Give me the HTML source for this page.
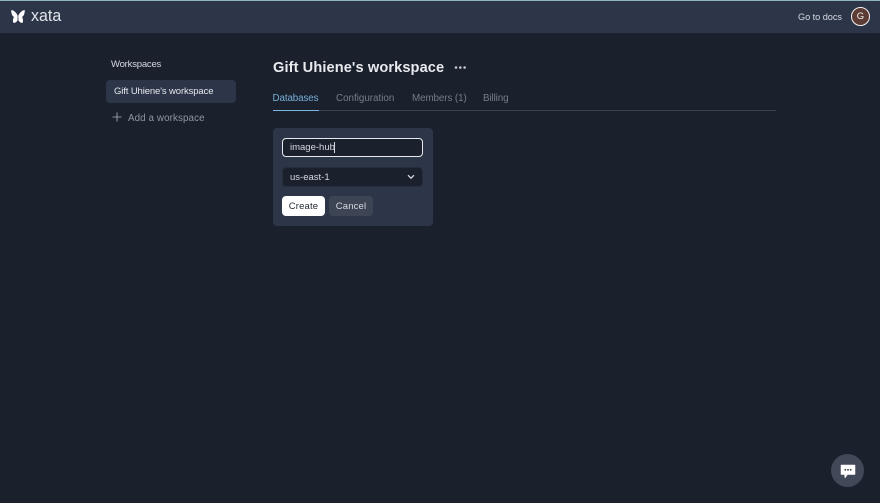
<!DOCTYPE html>
<html><head><meta charset="utf-8"><style>
html,body{margin:0;padding:0}
body{width:880px;height:503px;background:#1a202c;overflow:hidden;position:relative;font-family:"Liberation Sans",sans-serif}
div,span{position:absolute;white-space:nowrap;box-sizing:border-box}
svg{position:absolute}
</style></head><body>
<div style="left:0;top:0;width:880px;height:33px;background:#2d3548"></div>
<div style="left:0;top:0;width:880px;height:1px;background:#8fb6bb"></div>
<svg style="left:11px;top:9px" width="14" height="15" viewBox="0 0 14 15"><path d="M0.300 1 C3.500 1.500 6 4.500 6.700 7 L6.500 11.500 C5 13.500 3.500 14.200 2.500 13.800 C1.500 12.500 2 9.500 3 8 C1 7 0 3.500 0.300 1Z M13.700 1 C10.500 1.500 8 4.500 7.300 7 L7.500 11.500 C9 13.500 10.500 14.200 11.500 13.800 C12.500 12.500 12 9.500 11 8 C13 7 14 3.500 13.700 1Z" fill="#fff"/></svg>
<span style="left:31px;top:6px;font-size:17px;line-height:20px;color:#e2e6ec;font-weight:400;transform:scaleX(.94);transform-origin:left">xata</span>
<span style="left:798px;top:11px;font-size:9.200px;line-height:12px;color:#d5d9e0;letter-spacing:-.05px">Go to docs</span>
<div style="left:851px;top:7px;width:19px;height:19px;border-radius:50%;background:#5c3c34;border:1px solid #f2f2f2;color:#f2f2f2;font-size:9.500px;line-height:18px;text-align:center">G</div>

<span style="left:111px;top:59px;font-size:9.500px;line-height:12px;color:#d5d9e0;letter-spacing:-.2px">Workspaces</span>
<div style="left:106px;top:80px;width:130px;height:23px;border-radius:4px;background:#2d3548"></div>
<span style="left:114px;top:86px;font-size:9.500px;line-height:12px;color:#e6e9ee;letter-spacing:-.12px">Gift Uhiene's workspace</span>
<svg style="left:112px;top:112px" width="10" height="10" viewBox="0 0 10 10"><path d="M5 .5V9.500M.5 5H9.500" stroke="#8a919e" stroke-width="1.100" fill="none"/></svg>
<span style="left:128px;top:112px;font-size:9.800px;line-height:13px;color:#8f96a3;letter-spacing:.1px">Add a workspace</span>

<span style="left:273px;top:59px;font-size:14.600px;line-height:19px;font-weight:700;color:#e8eaee;letter-spacing:.1px">Gift Uhiene's workspace</span>
<svg style="left:454px;top:65px" width="13" height="5" viewBox="0 0 13 5"><g fill="#c4c8d0"><circle cx="2" cy="2.500" r="1.300"/><circle cx="6.300" cy="2.500" r="1.300"/><circle cx="10.600" cy="2.500" r="1.300"/></g></svg>

<span style="left:272.500px;top:93px;font-size:9.800px;line-height:12px;color:#78aed8;letter-spacing:-.1px">Databases</span>
<span style="left:336px;top:93px;font-size:9.800px;line-height:12px;color:#767d8a;letter-spacing:0">Configuration</span>
<span style="left:412px;top:93px;font-size:9.800px;line-height:12px;color:#767d8a;letter-spacing:-.08px">Members (1)</span>
<span style="left:483px;top:93px;font-size:9.800px;line-height:12px;color:#767d8a;letter-spacing:-.1px">Billing</span>
<div style="left:273px;top:110px;width:503px;height:1px;background:#3a4150"></div>
<div style="left:273px;top:109.500px;width:46px;height:1.500px;background:#7db4e0"></div>

<div style="left:273px;top:128px;width:160px;height:98px;border-radius:4px;background:#2d3548"></div>
<div style="left:282px;top:138px;width:141px;height:19px;border-radius:4px;background:#1a202c;border:1.500px solid #e8eaed"></div>
<span style="left:290px;top:142px;font-size:9.500px;line-height:12px;color:#d5d9e0;letter-spacing:0">image-hub</span>
<div style="left:333.500px;top:141.500px;width:1px;height:11px;background:#d5d9e0"></div>
<div style="left:282px;top:167px;width:141px;height:20px;border-radius:4px;background:#1a202c;border:1px solid #262d3b"></div>
<span style="left:290px;top:172px;font-size:9.500px;line-height:12px;color:#d5d9e0;letter-spacing:0">us-east-1</span>
<svg style="left:407px;top:174px" width="8" height="6" viewBox="0 0 8 6"><path d="M1 1.200L4 4.200L7 1.200" stroke="#d5d9e0" stroke-width="1.300" fill="none"/></svg>
<div style="left:282px;top:196px;width:43px;height:20px;border-radius:4px;background:#fff;color:#1f2633;font-size:9.500px;line-height:21px;text-align:center;letter-spacing:.15px">Create</div>
<div style="left:329px;top:196px;width:44px;height:20px;border-radius:4px;background:#3d4453;color:#d5d9e0;font-size:9.500px;line-height:21px;text-align:center;letter-spacing:.15px">Cancel</div>

<div style="left:831px;top:454px;width:33px;height:33px;border-radius:50%;background:#414858"></div>
<svg style="left:840px;top:464px" width="16" height="15" viewBox="0 0 16 15"><path d="M1 1H15V10.500H7.500L5 14L4.500 10.500H1Z" fill="#fff" stroke="#fff" stroke-width=".5" stroke-linejoin="round"/><g fill="#414858"><rect x="4.500" y="5" width="1.600" height="1.600"/><rect x="7.200" y="5" width="1.600" height="1.600"/><rect x="9.900" y="5" width="1.600" height="1.600"/></g></svg>
</body></html>
